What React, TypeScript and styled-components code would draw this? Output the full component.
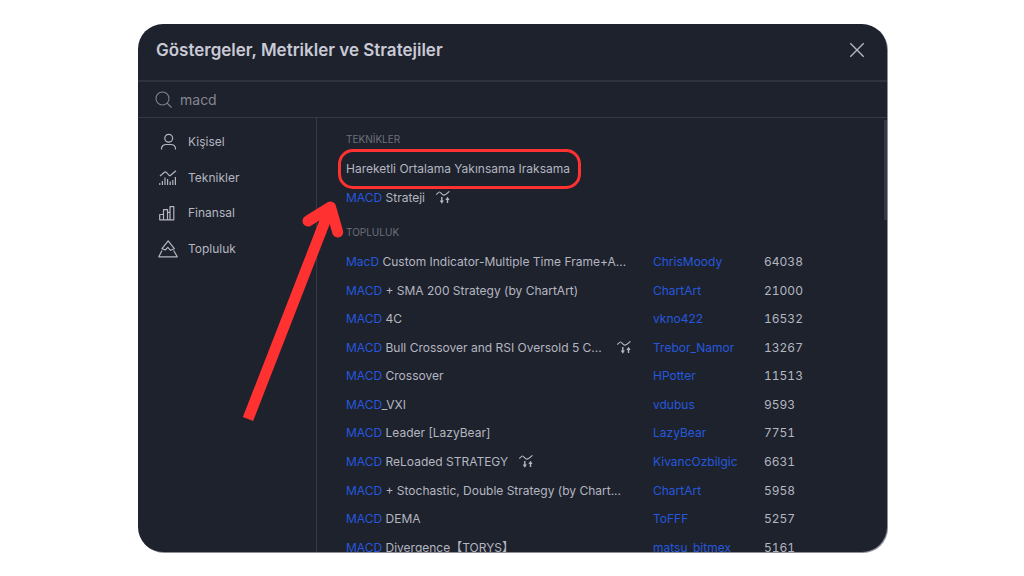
import React from 'react';
import styled, { createGlobalStyle } from 'styled-components';

const GlobalStyle = createGlobalStyle`
  *, *::before, *::after { box-sizing: border-box; }
  body {
    margin: 0;
    background: #fff;
    font-family: Inter, "Noto Sans CJK SC", sans-serif;
    color: #b4b6c0;
  }
`;

const Page = styled.main`
  height: 100vh;
  padding: 24px 137px 24px 138px;
  overflow: hidden;
`;

const Dialog = styled.section`
  position: relative;
  display: flex;
  flex-direction: column;
  height: 100%;
  overflow: hidden;
  background: #1e222d;
  border-radius: 25px;
  box-shadow: 1px 1px 0 #8e9097;
`;

const Header = styled.header`
  display: flex;
  align-items: center;
  justify-content: space-between;
  flex: none;
  height: 58px;
  padding: 0 20px 4px 18px;
  border-bottom: 2px solid #30333f;
`;

const Title = styled.h1`
  margin: 0;
  font-size: 17px;
  line-height: 24px;
  font-weight: 600;
  color: #c9cad6;
`;

const CloseButton = styled.button`
  display: flex;
  padding: 2px;
  border: 0;
  background: none;
  color: #b9bbc5;
`;

const SearchBar = styled.label`
  display: flex;
  align-items: center;
  flex: none;
  gap: 8px;
  height: 36px;
  padding: 0 17px;
  border-bottom: 1px solid #363944;
  color: #7f828c;
`;

const SearchInput = styled.input`
  flex: 1;
  min-width: 0;
  padding: 0;
  border: 0;
  outline: 0;
  background: none;
  font-family: inherit;
  font-size: 14px;
  line-height: 20px;
  color: #858791;
`;

const Body = styled.div`
  display: flex;
  flex: 1;
  min-height: 0;
`;

const Sidebar = styled.nav`
  flex: none;
  width: 179px;
  padding-top: 6px;
  border-right: 1px solid #363944;
`;

const Categories = styled.ul`
  display: grid;
  grid-auto-rows: 1fr;
  height: 143px;
  margin: 0;
  padding: 0;
  list-style: none;
`;

const CategoryButton = styled.button`
  display: flex;
  align-items: center;
  gap: 10px;
  width: 100%;
  height: 100%;
  padding: 0 20px;
  border: 0;
  background: none;
  font-family: inherit;
  font-size: 12px;
  line-height: 16px;
  color: #b4b6c0;
`;

const Results = styled.div`
  position: relative;
  display: flex;
  flex-direction: column;
  flex: 1;
  gap: 13px;
  min-width: 0;
  padding: 14px 0 0 29px;
  overflow: hidden;
`;

const Scrollbar = styled.div`
  position: absolute;
  top: 2px;
  right: 0;
  width: 3px;
  height: 100px;
  background: #363944;
`;

const SectionTitle = styled.h2`
  margin: 0 0 8px;
  font-size: 10px;
  line-height: 15px;
  font-weight: 400;
  color: #6d707b;
`;

const ResultTable = styled.table<{ $height: number }>`
  width: 100%;
  height: ${(p) => p.$height}px;
  table-layout: fixed;
  border-collapse: collapse;
  font-size: 12px;
  line-height: 16px;
`;

const NameColumn = styled.col`
  width: 307px;
`;

const AuthorColumn = styled.col`
  width: 111px;
`;

const Cell = styled.td`
  padding: 0;
  white-space: nowrap;
`;

const CountCell = styled(Cell)`
  font-variant-numeric: tabular-nums;
`;

const Name = styled.span<{ $full?: boolean }>`
  position: relative;
  display: inline-flex;
  align-items: center;
  justify-content: space-between;
  gap: 11px;
  min-width: ${(p) => (p.$full ? '285px' : '0')};
`;

const Match = styled.span`
  color: #2558dd;
`;

const AuthorLink = styled.a`
  color: #2558dd;
  text-decoration: none;
`;

const Ring = styled.span`
  position: absolute;
  inset: -12px -11px -12px -8px;
  border: 3px solid #ff3131;
  border-radius: 15px;
`;

const Arrow = styled.svg`
  position: absolute;
  top: 170px;
  left: 100px;
  pointer-events: none;
`;

type Item = {
  match: string;
  rest: string;
  strategy?: boolean;
  truncated?: boolean;
  ringed?: boolean;
  author?: string;
  count?: string;
};

const technicals: Item[] = [
  { match: '', rest: 'Hareketli Ortalama Yakınsama Iraksama', ringed: true },
  { match: 'MACD', rest: ' Strateji', strategy: true },
];

const community: Item[] = [
  { match: 'MacD', rest: ' Custom Indicator-Multiple Time Frame+A...', author: 'ChrisMoody', count: '64038' },
  { match: 'MACD', rest: ' + SMA 200 Strategy (by ChartArt)', author: 'ChartArt', count: '21000' },
  { match: 'MACD', rest: ' 4C', author: 'vkno422', count: '16532' },
  { match: 'MACD', rest: ' Bull Crossover and RSI Oversold 5 C...', strategy: true, truncated: true, author: 'Trebor_Namor', count: '13267' },
  { match: 'MACD', rest: ' Crossover', author: 'HPotter', count: '11513' },
  { match: 'MACD', rest: '_VXI', author: 'vdubus', count: '9593' },
  { match: 'MACD', rest: ' Leader [LazyBear]', author: 'LazyBear', count: '7751' },
  { match: 'MACD', rest: ' ReLoaded STRATEGY', strategy: true, author: 'KivancOzbilgic', count: '6631' },
  { match: 'MACD', rest: ' + Stochastic, Double Strategy (by Chart...', author: 'ChartArt', count: '5958' },
  { match: 'MACD', rest: ' DEMA', author: 'ToFFF', count: '5257' },
  { match: 'MACD', rest: ' Divergence【TORYS】', author: 'matsu_bitmex', count: '5161' },
];

const StrategyIcon = () => (
  <svg width="14" height="14" viewBox="0 0 14 14" fill="none" stroke="currentColor" strokeLinejoin="round">
    <path d="M.3 3.6C1.500 2.500 2.500 1 3.500 1c1.200 0 2.600 3.200 4.200 3.200C9 4.200 11.500 2.200 13.400.4" strokeWidth="1.200" />
    <path d="M5.800 6v4.500M11.500 12V8.500" strokeWidth="1.400" />
    <path d="M3.700 9.500h4.200L5.800 12.800zM9.400 9h4.200L11.500 5.700z" fill="currentColor" stroke="none" />
  </svg>
);

const categories: { label: string; icon: React.ReactNode }[] = [
  {
    label: 'Kişisel',
    icon: (
      <>
        <circle cx="10.700" cy="6.200" r="3.900" />
        <path d="M3.500 17.500v-.8c0-2.600 2.200-4.200 5-4.200h4c2.800 0 5 1.600 5 4.200v.8" />
      </>
    ),
  },
  {
    label: 'Teknikler',
    icon: (
      <>
        <path d="M2 8 6.500 4.200q.8-.7 1.600 0L11 7.200q.8.700 1.600 0L18 2.700" />
        <path d="M1.800 17v-2M4.400 17v-4M7 17V9.500M9.600 17v-6M12.200 17v-3.500M14.800 17v-5M17.400 17V9" />
      </>
    ),
  },
  {
    label: 'Finansal',
    icon: (
      <path d="M1.700 11.500h3.800v5.300H1.700zM5.500 6.700h4v10.100h-4zM9.500 9.300H12v7.500H9.500M12 3.700h3.800v13.100H12z" />
    ),
  },
  {
    label: 'Topluluk',
    icon: (
      <path d="M10.200 1.800 4 9.600 7.300 11l2.500-2.700 2.700 3 3.800-1.600zM4 11.500.8 17.800h18.500l-3.700-6.300" />
    ),
  },
];

const ResultName = ({ item }: { item: Item }) => (
  <Name $full={item.truncated}>
    <span>
      {item.match && <Match>{item.match}</Match>}
      {item.rest}
    </span>
    {item.strategy && <StrategyIcon />}
    {item.ringed && <Ring />}
  </Name>
);

export default function App() {
  return (
    <Page>
      <GlobalStyle />
      <Dialog role="dialog" aria-labelledby="dialog-title">
        <Header>
          <Title id="dialog-title">Göstergeler, Metrikler ve Stratejiler</Title>
          <CloseButton type="button" aria-label="Kapat">
            <svg width="16" height="16" viewBox="0 0 16 16" stroke="currentColor" strokeWidth="1.300">
              <path d="m1.300 1.300 13.400 13.400M14.700 1.300 1.300 14.700" />
            </svg>
          </CloseButton>
        </Header>
        <SearchBar>
          <svg width="17" height="17" viewBox="0 0 17 17" fill="none" stroke="currentColor" strokeWidth="1.100">
            <circle cx="7.500" cy="7.500" r="6.500" />
            <path d="m12 12 4.500 4.500" />
          </svg>
          <SearchInput type="text" aria-label="Ara" defaultValue="macd" />
        </SearchBar>
        <Body>
          <Sidebar>
            <Categories>
              {categories.map((c) => (
                <li key={c.label}>
                  <CategoryButton type="button">
                    <svg width="20" height="20" viewBox="0 0 20 20" fill="none" stroke="currentColor" strokeWidth="1.200" strokeLinejoin="round">
                      {c.icon}
                    </svg>
                    {c.label}
                  </CategoryButton>
                </li>
              ))}
            </Categories>
          </Sidebar>
          <Results>
            <section>
              <SectionTitle>TEKNİKLER</SectionTitle>
              <ResultTable $height={57}>
                <tbody>
                  {technicals.map((item) => (
                    <tr key={item.rest}>
                      <Cell><ResultName item={item} /></Cell>
                    </tr>
                  ))}
                </tbody>
              </ResultTable>
            </section>
            <section>
              <SectionTitle>TOPLULUK</SectionTitle>
              <ResultTable $height={314}>
                <colgroup>
                  <NameColumn />
                  <AuthorColumn />
                  <col />
                </colgroup>
                <tbody>
                  {community.map((item) => (
                    <tr key={item.rest}>
                      <Cell><ResultName item={item} /></Cell>
                      <Cell><AuthorLink href="#">{item.author}</AuthorLink></Cell>
                      <CountCell>{item.count}</CountCell>
                    </tr>
                  ))}
                </tbody>
              </ResultTable>
            </section>
            <Scrollbar />
          </Results>
        </Body>
        <Arrow width="110" height="232" viewBox="0 0 110 232" fill="none" stroke="#ff3131" strokeWidth="11">
          <path d="M10 225 92.500 13" />
          <path d="M70 27 92.500 13 99.700 38" strokeLinecap="round" strokeLinejoin="round" />
        </Arrow>
      </Dialog>
    </Page>
  );
}
